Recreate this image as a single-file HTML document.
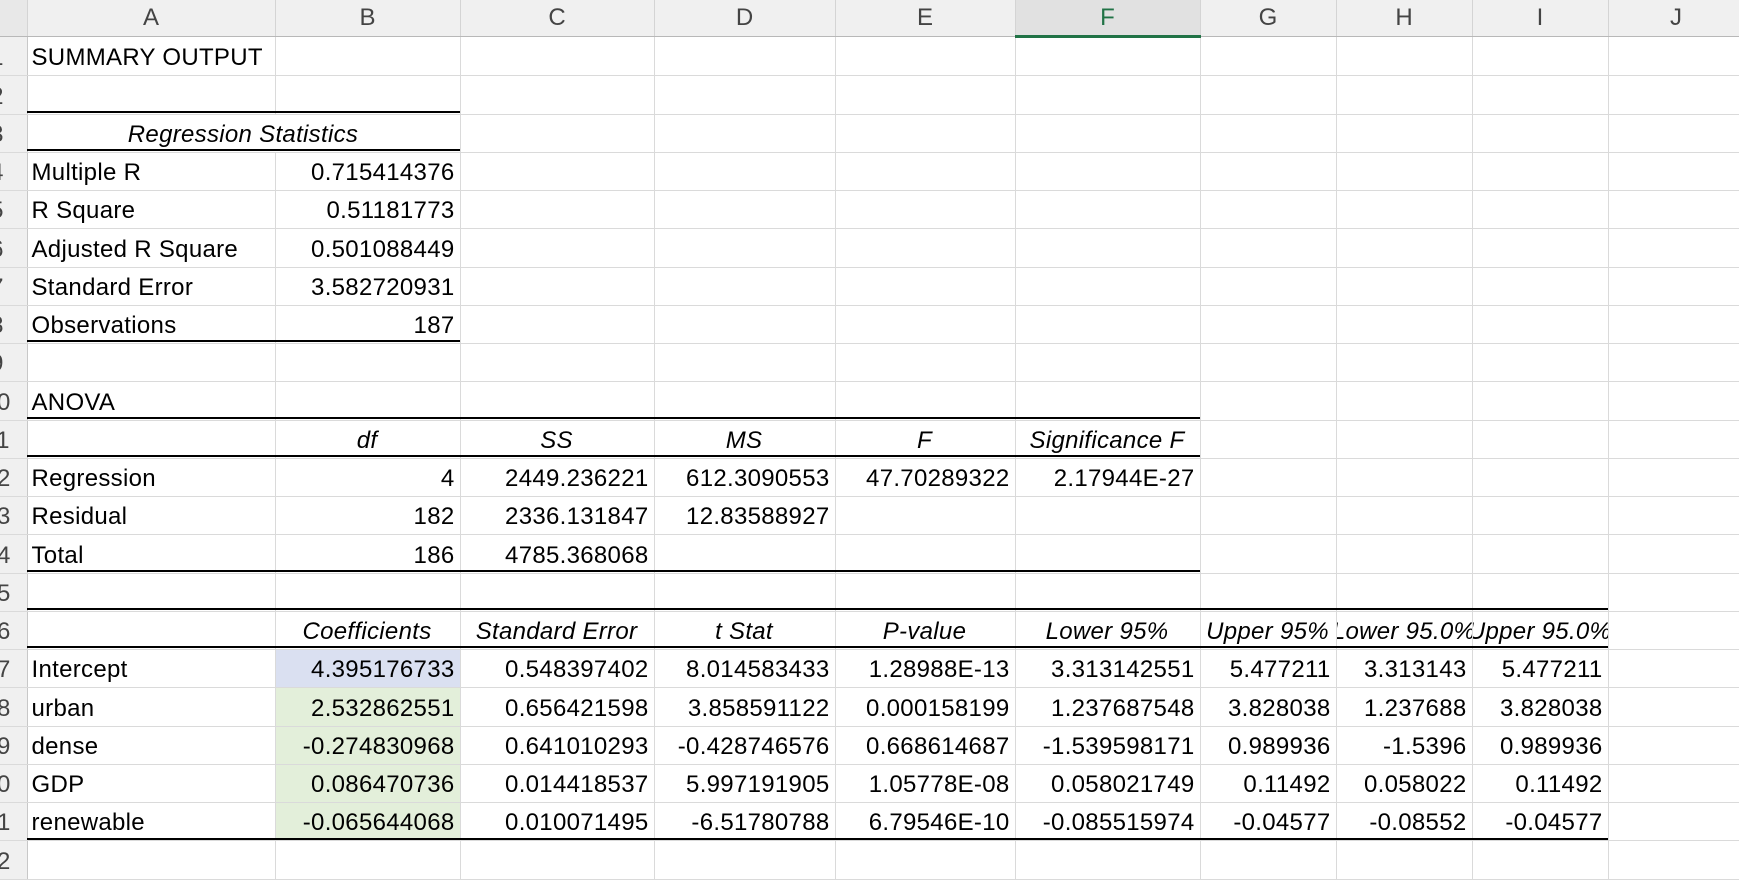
<!DOCTYPE html>
<html><head><meta charset="utf-8"><style>
html,body{margin:0;padding:0;background:#fff;width:1739px;height:881px;overflow:hidden}
body{font-family:"Liberation Sans",sans-serif;font-size:24px;color:#000;position:relative}
table{border-collapse:collapse;table-layout:fixed;position:absolute;left:0;top:0;width:1744px}
td{height:37.25px;padding:0;border-right:1px solid #dadada;border-bottom:1px solid #dadada;white-space:nowrap;overflow:hidden;vertical-align:bottom}
td>div{display:flex;height:37px;align-items:flex-end;padding:0 5px 3px 4px;box-sizing:border-box;white-space:nowrap;letter-spacing:0.3px}
.r{justify-content:flex-end}
.c{justify-content:center;font-style:italic}
.n{background:#f0f0f0;color:#444;border-right:1px solid #c8c8c8;border-bottom:1px solid #dadada}
.n>div{width:52px;margin-left:-29px;justify-content:center;padding:0 0 3px 0;color:#444}
tr.h td{height:35px;background:#f0f0f0;color:#444;text-align:center;vertical-align:middle;border-bottom:1px solid #b8b8b8;border-right:1px solid #d4d4d4}
tr.h td.sel{background:#e1e1e1;color:#217346;border-bottom:3px solid #217346}
.bl{background:#dae0f1}.gr{background:#e3efda}
.ln{position:absolute;height:2px;background:#000}
</style></head><body>
<table>
<colgroup><col style="width:27px"><col style="width:248px"><col style="width:185px"><col style="width:194px"><col style="width:181px"><col style="width:180px"><col style="width:185px"><col style="width:136px"><col style="width:136px"><col style="width:136px"><col style="width:136px"></colgroup>
<tr class="h"><td style="background:#e8e8e8"></td><td>A</td><td>B</td><td>C</td><td>D</td><td>E</td><td class="sel">F</td><td>G</td><td>H</td><td>I</td><td>J</td></tr>
<tr><td class="n"><div>1</div></td><td><div>SUMMARY OUTPUT</div></td><td></td><td></td><td></td><td></td><td></td><td></td><td></td><td></td><td></td></tr>
<tr><td class="n"><div>2</div></td><td></td><td></td><td></td><td></td><td></td><td></td><td></td><td></td><td></td><td></td></tr>
<tr><td class="n"><div>3</div></td><td colspan="2" style="border-right:1px solid #dadada"><div class="c">Regression Statistics</div></td><td></td><td></td><td></td><td></td><td></td><td></td><td></td><td></td></tr>
<tr><td class="n"><div>4</div></td><td><div>Multiple R</div></td><td><div class="r">0.715414376</div></td><td></td><td></td><td></td><td></td><td></td><td></td><td></td><td></td></tr>
<tr><td class="n"><div>5</div></td><td><div>R Square</div></td><td><div class="r">0.51181773</div></td><td></td><td></td><td></td><td></td><td></td><td></td><td></td><td></td></tr>
<tr><td class="n"><div>6</div></td><td><div>Adjusted R Square</div></td><td><div class="r">0.501088449</div></td><td></td><td></td><td></td><td></td><td></td><td></td><td></td><td></td></tr>
<tr><td class="n"><div>7</div></td><td><div>Standard Error</div></td><td><div class="r">3.582720931</div></td><td></td><td></td><td></td><td></td><td></td><td></td><td></td><td></td></tr>
<tr><td class="n"><div>8</div></td><td><div>Observations</div></td><td><div class="r">187</div></td><td></td><td></td><td></td><td></td><td></td><td></td><td></td><td></td></tr>
<tr><td class="n"><div>9</div></td><td></td><td></td><td></td><td></td><td></td><td></td><td></td><td></td><td></td><td></td></tr>
<tr><td class="n"><div>10</div></td><td><div>ANOVA</div></td><td></td><td></td><td></td><td></td><td></td><td></td><td></td><td></td><td></td></tr>
<tr><td class="n"><div>11</div></td><td></td><td><div class="c">df</div></td><td><div class="c">SS</div></td><td><div class="c">MS</div></td><td><div class="c">F</div></td><td><div class="c">Significance F</div></td><td></td><td></td><td></td><td></td></tr>
<tr><td class="n"><div>12</div></td><td><div>Regression</div></td><td><div class="r">4</div></td><td><div class="r">2449.236221</div></td><td><div class="r">612.3090553</div></td><td><div class="r">47.70289322</div></td><td><div class="r">2.17944E-27</div></td><td></td><td></td><td></td><td></td></tr>
<tr><td class="n"><div>13</div></td><td><div>Residual</div></td><td><div class="r">182</div></td><td><div class="r">2336.131847</div></td><td><div class="r">12.83588927</div></td><td></td><td></td><td></td><td></td><td></td><td></td></tr>
<tr><td class="n"><div>14</div></td><td><div>Total</div></td><td><div class="r">186</div></td><td><div class="r">4785.368068</div></td><td></td><td></td><td></td><td></td><td></td><td></td><td></td></tr>
<tr><td class="n"><div>15</div></td><td></td><td></td><td></td><td></td><td></td><td></td><td></td><td></td><td></td><td></td></tr>
<tr><td class="n"><div>16</div></td><td></td><td><div class="c">Coefficients</div></td><td><div class="c">Standard Error</div></td><td><div class="c">t Stat</div></td><td><div class="c">P-value</div></td><td><div class="c">Lower 95%</div></td><td><div class="c">Upper 95%</div></td><td><div class="c">Lower 95.0%</div></td><td style="overflow:visible"><div class="c" style="overflow:hidden">Upper 95.0%</div></td><td></td></tr>
<tr><td class="n"><div>17</div></td><td><div>Intercept</div></td><td class="bl"><div class="r">4.395176733</div></td><td><div class="r">0.548397402</div></td><td><div class="r">8.014583433</div></td><td><div class="r">1.28988E-13</div></td><td><div class="r">3.313142551</div></td><td><div class="r">5.477211</div></td><td><div class="r">3.313143</div></td><td><div class="r">5.477211</div></td><td></td></tr>
<tr><td class="n"><div>18</div></td><td><div>urban</div></td><td class="gr"><div class="r">2.532862551</div></td><td><div class="r">0.656421598</div></td><td><div class="r">3.858591122</div></td><td><div class="r">0.000158199</div></td><td><div class="r">1.237687548</div></td><td><div class="r">3.828038</div></td><td><div class="r">1.237688</div></td><td><div class="r">3.828038</div></td><td></td></tr>
<tr><td class="n"><div>19</div></td><td><div>dense</div></td><td class="gr"><div class="r">-0.274830968</div></td><td><div class="r">0.641010293</div></td><td><div class="r">-0.428746576</div></td><td><div class="r">0.668614687</div></td><td><div class="r">-1.539598171</div></td><td><div class="r">0.989936</div></td><td><div class="r">-1.5396</div></td><td><div class="r">0.989936</div></td><td></td></tr>
<tr><td class="n"><div>20</div></td><td><div>GDP</div></td><td class="gr"><div class="r">0.086470736</div></td><td><div class="r">0.014418537</div></td><td><div class="r">5.997191905</div></td><td><div class="r">1.05778E-08</div></td><td><div class="r">0.058021749</div></td><td><div class="r">0.11492</div></td><td><div class="r">0.058022</div></td><td><div class="r">0.11492</div></td><td></td></tr>
<tr><td class="n"><div>21</div></td><td><div>renewable</div></td><td class="gr"><div class="r">-0.065644068</div></td><td><div class="r">0.010071495</div></td><td><div class="r">-6.51780788</div></td><td><div class="r">6.79546E-10</div></td><td><div class="r">-0.085515974</div></td><td><div class="r">-0.04577</div></td><td><div class="r">-0.08552</div></td><td><div class="r">-0.04577</div></td><td></td></tr>
<tr><td class="n"><div>22</div></td><td></td><td></td><td></td><td></td><td></td><td></td><td></td><td></td><td></td><td></td></tr>
</table>
<div class="ln" style="left:27px;width:433px;top:111px"></div>
<div class="ln" style="left:27px;width:433px;top:149px;height:1.5px"></div>
<div class="ln" style="left:27px;width:433px;top:340px"></div>
<div class="ln" style="left:27px;width:1173px;top:417px"></div>
<div class="ln" style="left:27px;width:1173px;top:455px;height:1.5px"></div>
<div class="ln" style="left:27px;width:1173px;top:570px"></div>
<div class="ln" style="left:27px;width:1581px;top:608px"></div>
<div class="ln" style="left:27px;width:1581px;top:646px;height:1.5px"></div>
<div class="ln" style="left:27px;width:1581px;top:838px"></div>
</body></html>
